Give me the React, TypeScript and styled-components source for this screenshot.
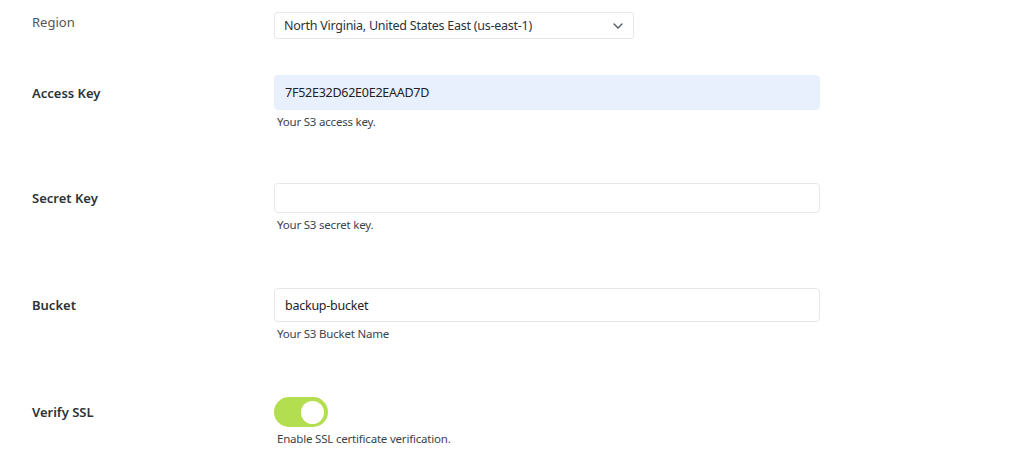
import React from "react";
import styled, { createGlobalStyle } from "styled-components";

const Global = createGlobalStyle`
  html, body { margin: 0; padding: 0; background: #ffffff; }
  body { font-family: "Noto Sans", "Open Sans", sans-serif; color: #2c3338; }
  * { box-sizing: border-box; }
`;

const Form = styled.div`
  padding: 12px 0 0 32px;
  display: flex;
  flex-direction: column;
`;

const Row = styled.div<{ $gap: number }>`
  display: grid;
  grid-template-columns: 242px auto;
  justify-content: start;
  margin-bottom: ${(p) => p.$gap}px;
`;

const Label = styled.div<{ $light?: boolean }>`
  align-self: ${(p) => (p.$light ? "start" : "center")};
  padding-top: ${(p) => (p.$light ? "1px" : "0")};
  font-size: 13px;
  line-height: 18px;
  font-weight: ${(p) => (p.$light ? 400 : 600)};
  color: ${(p) => (p.$light ? "#50575e" : "#2c3338")};
`;

const Field = styled.div`
  display: flex;
  flex-direction: column;
`;

const SelectBox = styled.div`
  width: 360px;
  height: 27px;
  border: 1px solid #e6e7e9;
  border-radius: 3px;
  display: flex;
  align-items: center;
  justify-content: space-between;
  padding: 0 10px 0 9px;
  font-size: 12.5px;
  letter-spacing: -0.25px;
  color: #2c3338;
  background: #fff;
`;

const TextInput = styled.input<{ $h: number; $filled?: boolean }>`
  width: 546px;
  height: ${(p) => p.$h}px;
  border: 1px solid ${(p) => (p.$filled ? "#e8f0fe" : "#e6e7e9")};
  border-radius: 4px;
  background: ${(p) => (p.$filled ? "#e8f0fe" : "#ffffff")};
  padding: 0 10px;
  font-family: inherit;
  font-size: 12.5px;
  letter-spacing: -0.25px;
  color: #1d2327;
  outline: none;
`;

const Hint = styled.div`
  grid-column: 2;
  margin-top: 4px;
  padding-left: 3px;
  font-size: 11.5px;
  letter-spacing: -0.2px;
  color: #3c434a;
  line-height: 16px;
`;

const Toggle = styled.div`
  width: 54px;
  height: 30px;
  border-radius: 15px;
  background: #b3de4f;
  display: flex;
  align-items: center;
  justify-content: flex-end;
  padding-right: 4px;
`;

const Knob = styled.div`
  width: 23px;
  height: 23px;
  border-radius: 50%;
  background: #ffffff;
`;

const Chevron = () => (
  <svg width="10" height="6" viewBox="0 0 10 6" fill="none">
    <path d="M1 1l4 4 4-4" stroke="#50575e" strokeWidth="1.3" strokeLinecap="round" strokeLinejoin="round" />
  </svg>
);

export default function App() {
  return (
    <>
      <Global />
      <Form>
        <Row $gap={36}>
          <Label $light>Region</Label>
          <Field>
            <SelectBox>
              <span>North Virginia, United States East (us-east-1)</span>
              <Chevron />
            </SelectBox>
          </Field>
        </Row>
        <Row $gap={53}>
          <Label>Access Key</Label>
          <TextInput $h={35} $filled defaultValue="7F52E32D62E0E2EAAD7D" />
          <Hint>Your S3 access key.</Hint>
        </Row>
        <Row $gap={55}>
          <Label>Secret Key</Label>
          <TextInput $h={30} type="password" defaultValue="" />
          <Hint>Your S3 secret key.</Hint>
        </Row>
        <Row $gap={55}>
          <Label>Bucket</Label>
          <TextInput $h={34} defaultValue="backup-bucket" />
          <Hint>Your S3 Bucket Name</Hint>
        </Row>
        <Row $gap={0}>
          <Label>Verify SSL</Label>
          <Toggle>
            <Knob />
          </Toggle>
          <Hint>Enable SSL certificate verification.</Hint>
        </Row>
      </Form>
    </>
  );
}
